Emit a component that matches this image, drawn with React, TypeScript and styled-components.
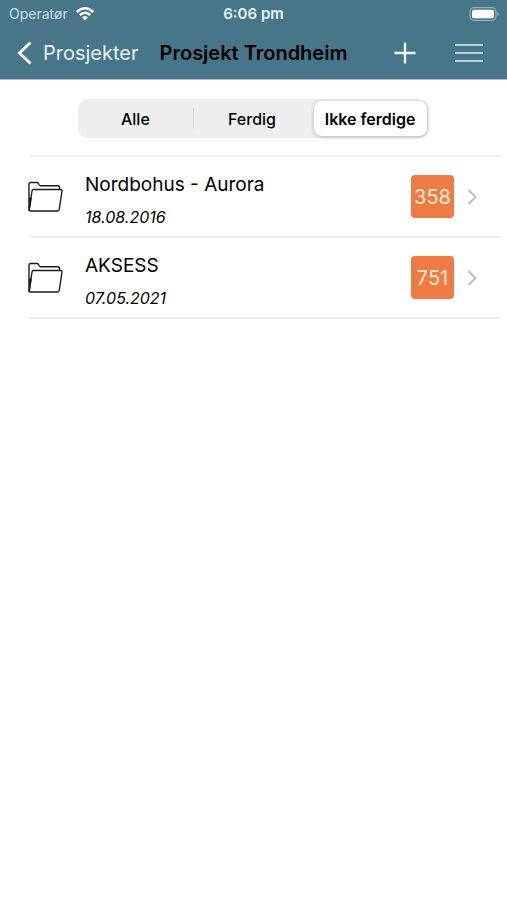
import React, { useState } from "react";
import styled, { createGlobalStyle } from "styled-components";

const GlobalStyle = createGlobalStyle`
  *, *::before, *::after { box-sizing: border-box; }
  body {
    margin: 0;
    background: #fff;
    color: #000;
    font-family: Inter, "Liberation Sans", sans-serif;
  }
  button { font: inherit; color: inherit; border: 0; padding: 0; background: none; cursor: pointer; }
`;

const Header = styled.header`
  background: #467687;
  color: #e6f5fa;
  border-bottom: 1px solid #a9c2ca;
`;

const StatusBar = styled.div`
  display: grid;
  grid-template-columns: 1fr auto 1fr;
  align-items: center;
  height: 27px;
  padding: 0 8px;
  font-size: 14px;
`;

const Carrier = styled.span`
  display: flex;
  align-items: center;
  gap: 8px;
  padding-left: 1px;
  color: #c9e0e9;
`;

const Clock = styled.time`
  font-size: 15px;
  font-weight: 600;
`;

const BatterySlot = styled.span`
  display: flex;
  justify-content: flex-end;
`;

const NavBar = styled.nav`
  display: grid;
  grid-template-columns: 1fr auto 1fr;
  align-items: center;
  height: 52px;
  padding: 0 16px;
`;

const BackLink = styled.a`
  display: flex;
  align-items: center;
  gap: 10px;
  color: #e6f5fa;
  font-size: 20px;
  text-decoration: none;
`;

const Title = styled.h1`
  margin: 0;
  color: #000;
  font-size: 20px;
  font-weight: 600;
  white-space: nowrap;
`;

const Actions = styled.div`
  display: flex;
  justify-content: flex-end;
  align-items: center;
  gap: 39px;
  padding-right: 8px;
`;

const IconButton = styled.button`
  display: flex;
`;

const Segments = styled.div`
  display: grid;
  grid-template-columns: repeat(3, 1fr);
  width: 69.4%;
  height: 39px;
  margin: 19px auto 17px;
  padding: 2px 2px 2px 0;
  border-radius: 10px;
  background: #eeeeee;
`;

const Segment = styled.button<{ $active: boolean; $divider: boolean }>`
  display: flex;
  align-items: center;
  margin-left: ${(p) => (p.$active ? "3px" : "0")};
  font-size: 16px;
  font-weight: ${(p) => (p.$active ? 600 : 500)};
  border-radius: 8px;
  background: ${(p) => (p.$active ? "#fff" : "transparent")};
  box-shadow: ${(p) => (p.$active ? "0 1px 4px rgba(0, 0, 0, 0.25)" : "none")};

  &::after {
    content: "";
    width: 1px;
    height: 21px;
    background: ${(p) => (p.$divider ? "#d8d8d8" : "transparent")};
  }
`;

const SegmentLabel = styled.span`
  flex: 1;
  text-align: center;
  white-space: nowrap;
`;

const List = styled.ul`
  list-style: none;
  margin: 0 6px 0 28px;
  padding: 0;
`;

const Item = styled.li`
  &::after {
    content: "";
    display: block;
    height: 2px;
    margin-left: 2px;
    background: #ededed;
  }

  &:first-child::before {
    content: "";
    display: block;
    height: 2px;
    margin-left: 2px;
    background: #ededed;
  }
`;

const ItemLink = styled.a`
  display: flex;
  align-items: center;
  height: 79px;
  padding-right: 24px;
  color: #000;
  text-decoration: none;
`;

const Details = styled.span`
  display: flex;
  flex: 1;
  flex-direction: column;
  gap: 8px;
  padding-top: 6px;
  margin-left: 21px;
`;

const Name = styled.span`
  font-size: 19px;
  line-height: 26px;
`;

const DateText = styled.time`
  font-size: 16px;
  line-height: 22px;
  font-style: italic;
`;

const Count = styled.span`
  display: grid;
  place-items: center;
  width: 43px;
  height: 43px;
  margin-right: 13px;
  border-radius: 4px;
  background: #ef7b42;
  color: #ffeedd;
  font-size: 20px;
`;

const FolderIcon = () => (
  <svg width="36" height="32" viewBox="0 0 36 32" fill="none" stroke="#1c1c1c" strokeWidth="1.4" strokeLinejoin="round" strokeLinecap="round" aria-hidden="true">
    <path d="M1 29V3Q1 1.500 2.500 1.500H9Q10 1.500 10.500 2.500L11.300 4Q11.700 4.700 12.500 4.700H30Q31.500 4.700 31.500 6V8" />
    <path d="M5.500 8.500H32.500Q34.300 8.500 34 10.200L31.200 28.500Q31 30 29.500 30H2Q1 30 1.200 28.700L4 10Q4.200 8.500 5.500 8.500Z" />
    <path d="M1.600 17V27L3.100 17" />
  </svg>
);

const ChevronRight = () => (
  <svg width="10" height="16" viewBox="0 0 10 16" fill="none" stroke="#bdbdbd" strokeWidth="2" aria-hidden="true">
    <path d="M1.500 1L8.500 8L1.500 15" />
  </svg>
);

const ChevronLeft = () => (
  <svg width="17" height="24" viewBox="0 0 17 24" fill="none" stroke="#fff" strokeWidth="3" aria-hidden="true">
    <path d="M14.500 1.500L3.500 12L14.500 22.500" />
  </svg>
);

const WifiIcon = () => (
  <svg width="18" height="14" viewBox="0 0 18 14" fill="none" stroke="#fff" strokeWidth="2.400" aria-hidden="true">
    <path d="M0.800 5Q9 -2.400 17.200 5" />
    <path d="M3.800 8Q9 3.400 14.200 8" />
    <path d="M6.100 10.400Q9 7.800 11.900 10.400L9 13.400Z" fill="#fff" stroke="none" />
  </svg>
);

const BatteryIcon = () => (
  <svg width="30" height="14" viewBox="0 0 30 14" aria-hidden="true">
    <rect x="1" y="0.700" width="26" height="12.600" rx="4" fill="none" stroke="#8fb0bc" strokeWidth="1.200" />
    <rect x="3" y="2.700" width="22" height="8.600" rx="2" fill="#fff" />
    <path d="M28.300 5V9Q29.800 8.500 29.800 7Q29.800 5.500 28.300 5Z" fill="#8fb0bc" />
  </svg>
);

const PlusIcon = () => (
  <svg width="22" height="22" viewBox="0 0 22 22" stroke="#eefaff" strokeWidth="2.400" aria-hidden="true">
    <path d="M0.500 11H21.500M11 0.500V21.500" />
  </svg>
);

const MenuIcon = () => (
  <svg width="28" height="20" viewBox="0 0 28 20" stroke="#b5d3dc" strokeWidth="2" aria-hidden="true">
    <path d="M0 2H28M0 10H28M0 18H28" />
  </svg>
);

const filters = ["Alle", "Ferdig", "Ikke ferdige"];

const projects = [
  { name: "Nordbohus - Aurora", date: "18.08.2016", iso: "2016-08-18", count: 358 },
  { name: "AKSESS", date: "07.05.2021", iso: "2021-05-07", count: 751 },
];

export default function App() {
  const [active, setActive] = useState(2);
  return (
    <>
      <GlobalStyle />
      <Header>
        <StatusBar>
          <Carrier>Operatør <WifiIcon /></Carrier>
          <Clock>6:06 pm</Clock>
          <BatterySlot><BatteryIcon /></BatterySlot>
        </StatusBar>
        <NavBar>
          <BackLink href="#prosjekter"><ChevronLeft />Prosjekter</BackLink>
          <Title>Prosjekt Trondheim</Title>
          <Actions>
            <IconButton type="button" aria-label="Legg til"><PlusIcon /></IconButton>
            <IconButton type="button" aria-label="Meny"><MenuIcon /></IconButton>
          </Actions>
        </NavBar>
      </Header>
      <main>
        <Segments role="group" aria-label="Filter">
          {filters.map((label, i) => (
            <Segment
              key={label}
              type="button"
              aria-pressed={active === i}
              $active={active === i}
              $divider={i < 2 && active !== i && active !== i + 1}
              onClick={() => setActive(i)}
            >
              <SegmentLabel>{label}</SegmentLabel>
            </Segment>
          ))}
        </Segments>
        <List>
          {projects.map((p) => (
            <Item key={p.name}>
              <ItemLink href="#prosjekt">
                <FolderIcon />
                <Details>
                  <Name>{p.name}</Name>
                  <DateText dateTime={p.iso}>{p.date}</DateText>
                </Details>
                <Count>{p.count}</Count>
                <ChevronRight />
              </ItemLink>
            </Item>
          ))}
        </List>
      </main>
    </>
  );
}
